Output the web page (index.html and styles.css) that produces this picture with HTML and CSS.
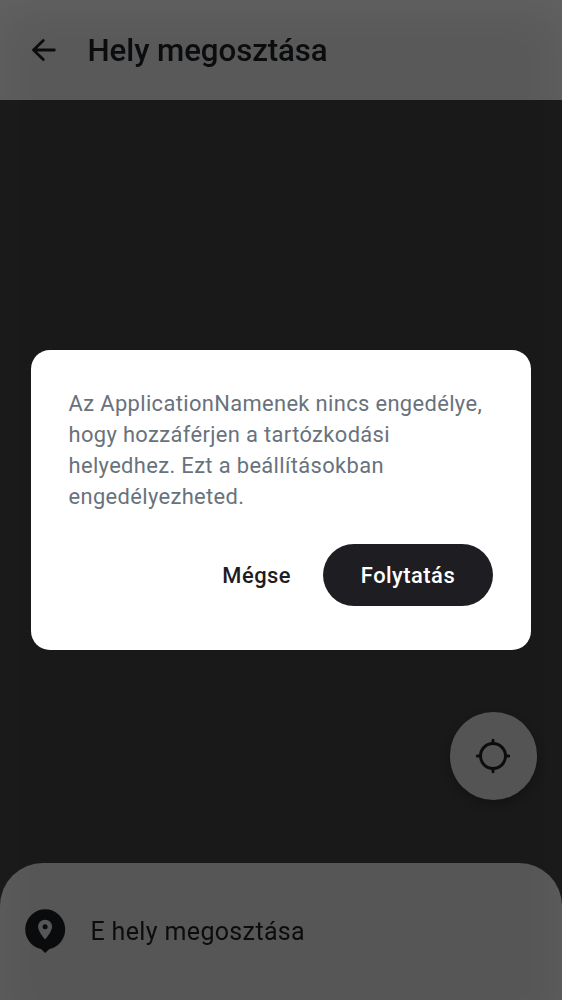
FILE: index.html
```html
<!DOCTYPE html>
<html lang="hu">
<head>
<meta charset="utf-8">
<title>Hely megosztása</title>
<link rel="stylesheet" href="styles.css">
</head>
<body>
<div class="screen">
  <header class="app-bar">
    <svg class="back-icon" viewBox="0 0 28 28" width="28" height="28"><path d="M24.300 14H3.500M13.300 4.500 3.500 14l9.800 9.500"/></svg>
    <h1 class="title">Hely megosztása</h1>
  </header>
  <main class="map">
    <button class="locate" aria-label="Saját hely">
      <svg class="locate-icon" viewBox="0 0 36 36" width="36" height="36"><circle cx="18" cy="18" r="12.500"/><path d="M18 2.300v3M18 30.700v3M2.300 18h3M30.700 18h3"/></svg>
    </button>
  </main>
  <footer class="sheet">
    <svg class="pin-icon" viewBox="0 0 42 46" width="42" height="46">
      <path class="pin-badge" d="M21.200 1.200a20.200 20.200 0 0 1 4.200 39.900L21.200 45l-4.200-3.900A20.200 20.200 0 0 1 21.200 1.200Z"/>
      <path class="pin-mark" fill-rule="evenodd" d="M21.100 11.800c-3.900 0-7 3-7 6.900 0 5 7 12.700 7 12.700s7-7.700 7-12.700c0-3.900-3.100-6.900-7-6.900Zm0 4.500a2.500 2.500 0 1 1 0 5 2.500 2.500 0 0 1 0-5Z"/>
    </svg>
    <span class="sheet-label">E hely megosztása</span>
  </footer>
  <div class="glow"></div>
  <div class="scrim">
    <section class="dialog" role="dialog">
      <p class="message">Az ApplicationNamenek nincs engedélye,<br>hogy hozzáférjen a tartózkodási<br>helyedhez. Ezt a beállításokban<br>engedélyezheted.</p>
      <div class="actions">
        <button class="button">Mégse</button>
        <button class="button primary">Folytatás</button>
      </div>
    </section>
  </div>
</div>
</body>
</html>
```
FILE: styles.css
```css
* { box-sizing: border-box; }
body { margin: 0; font-family: Roboto, sans-serif; }
button { border: 0; padding: 0; font: inherit; background: none; }
.screen {
  position: relative;
  display: flex;
  flex-direction: column;
  width: 562px;
  height: 1000px;
  overflow: hidden;
  background: #191919;
}
.app-bar {
  display: flex;
  align-items: center;
  gap: 29.500px;
  height: 100px;
  padding-left: 30px;
  background: #595959;
}
.back-icon { fill: none; stroke: #0b0c0e; stroke-width: 2.800; stroke-linecap: round; stroke-linejoin: round; }
.title { margin: 0; padding-top: 1px; font-size: 31.250px; font-weight: 500; line-height: 40px; letter-spacing: -.080px; color: #0b0c0e; }
.map {
  display: flex;
  flex: 1;
  align-items: flex-end;
  justify-content: flex-end;
  padding: 0 25px 63px 0;
}
.locate {
  display: grid;
  place-items: center;
  width: 87.500px;
  height: 87.500px;
  border-radius: 50%;
  background: #545454;
  box-shadow: 0 4px 10px rgba(0, 0, 0, .25);
}
.locate-icon { fill: none; stroke: #0b0c0e; stroke-width: 3; stroke-linecap: round; }
.sheet {
  display: flex;
  align-items: center;
  gap: 24.500px;
  height: 137.500px;
  padding-left: 24px;
  border-radius: 43px 43px 0 0;
  background: #565656;
}
.pin-badge { fill: #090b0d; }
.pin-mark { fill: #565656; }
.sheet-label { font-size: 25px; letter-spacing: .350px; color: #0b0c0d; }
/* Brightens the light surfaces towards the top and side edges; the dark map barely changes. */
.glow {
  position: absolute;
  inset: 0 0 -25px;
  box-shadow: inset 0 8px 45px rgb(24, 24, 24);
  mix-blend-mode: color-dodge;
}
.scrim {
  position: absolute;
  inset: 0;
  display: grid;
  place-items: center;
}
.dialog {
  width: 500px;
  height: 300px;
  padding: 37.500px;
  border-radius: 19px;
  background: #fff;
}
.message { margin: 0; font-size: 21.900px; line-height: 31.250px; letter-spacing: .360px; white-space: nowrap; color: #68727c; }
.actions { display: flex; justify-content: flex-end; margin: 31.500px .500px 0 0; }
.button { height: 62px; padding: 0 32px; font-size: 21.900px; font-weight: 500; letter-spacing: .480px; color: #1d1d22; }
.primary { width: 170px; padding: 0; border-radius: 31px; background: #1d1d22; color: #fff; }
```
